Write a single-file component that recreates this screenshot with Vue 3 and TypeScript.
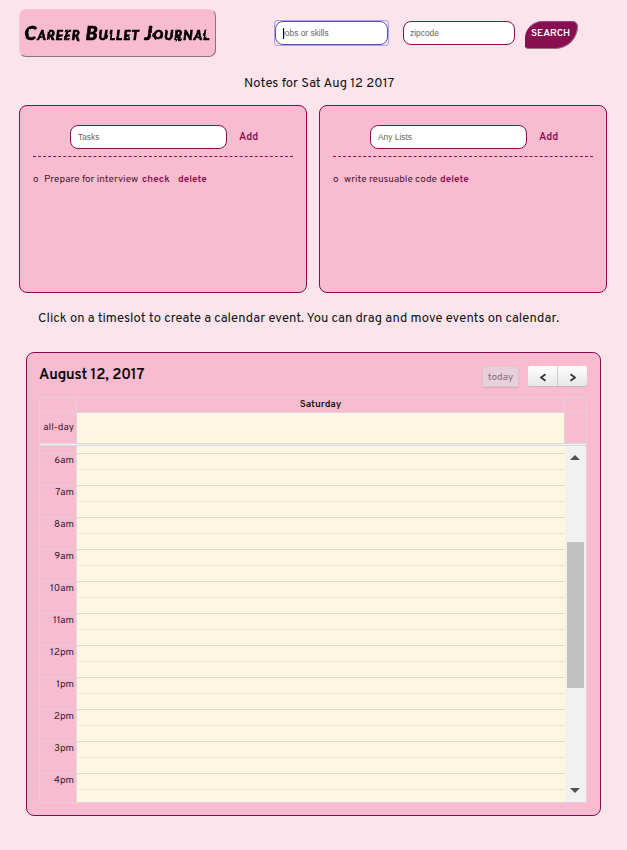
<script setup lang="ts">
import { onMounted, ref } from 'vue'

interface Note {
  text: string
  actions: string[]
}
interface Panel {
  placeholder: string
  notes: Note[]
}

const panels: Panel[] = [
  { placeholder: 'Tasks', notes: [{ text: 'Prepare for interview', actions: ['check', 'delete'] }] },
  { placeholder: 'Any Lists', notes: [{ text: 'write reusuable code', actions: ['delete'] }] },
]
const hours: string[] = ['6am', '7am', '8am', '9am', '10am', '11am', '12pm', '1pm', '2pm', '3pm', '4pm']

const skills = ref<HTMLInputElement | null>(null)
onMounted(() => skills.value?.focus())
</script>

<template>
  <div class="page">
    <header class="top">
      <h1 class="logo"><span>Career Bullet Journal</span></h1>
      <form class="search" @submit.prevent>
        <div class="focus-ring">
          <input ref="skills" class="field" placeholder="jobs or skills" />
          <i class="caret"></i>
        </div>
        <input class="field" placeholder="zipcode" />
        <button class="go"><span>SEARCH</span></button>
      </form>
    </header>

    <p class="date"><span>Notes for Sat Aug 12 2017</span></p>

    <main class="panels">
      <section v-for="p in panels" :key="p.placeholder" class="panel">
        <div class="entry">
          <input class="field" :placeholder="p.placeholder" />
          <button class="link add">Add</button>
        </div>
        <ul>
          <li v-for="n in p.notes" :key="n.text">
            <span class="dot">o</span><span :class="['note', n.actions.length > 1 ? 'task' : 'list']">{{ n.text }}</span>
            <button v-for="a in n.actions" :key="a" :class="['link', a]">{{ a }}</button>
          </li>
        </ul>
      </section>
    </main>

    <p class="hint"><span>Click on a timeslot to create a calendar event. You can drag and move events on calendar.</span></p>

    <section class="calendar">
      <div class="toolbar">
        <h2><span>August 12, 2017</span></h2>
        <button class="today">today</button>
        <div class="nav">
          <button><svg width="8" height="9" viewBox="0 0 8 9"><path d="M6.5 1.2 2 4.5 6.5 7.8" /></svg></button>
          <button><svg width="8" height="9" viewBox="0 0 8 9"><path d="M1.5 1.2 6 4.5 1.5 7.8" /></svg></button>
        </div>
      </div>
      <div class="table">
        <div class="row head"><div></div><div class="day">Saturday</div><div></div></div>
        <div class="row allday"><div class="label">all-day</div><div class="cell"></div><div></div></div>
        <div class="divider"></div>
        <div class="body">
          <div class="slots">
            <div class="slot partial"><div></div><div></div></div>
            <div v-for="h in hours" :key="h" class="hour">
              <div class="slot major"><div class="label">{{ h }}</div><div></div></div>
              <div class="slot minor"><div></div><div></div></div>
            </div>
          </div>
          <div class="bar">
            <svg width="10" height="5" viewBox="0 0 10 5"><path d="M0 5 5 0 10 5Z" /></svg>
            <div class="thumb"></div>
            <svg class="down" width="10" height="5" viewBox="0 0 10 5"><path d="M0 0 5 5 10 0Z" /></svg>
          </div>
        </div>
      </div>
    </section>

    <svg class="defs" width="0" height="0">
      <filter id="marker" x="-5%" y="-20%" width="110%" height="140%">
        <feTurbulence type="fractalNoise" baseFrequency="0.1" numOctaves="1" seed="4" />
        <feDisplacementMap in="SourceGraphic" scale="3" xChannelSelector="R" yChannelSelector="G" />
      </filter>
    </svg>
  </div>
</template>

<style>
body { margin: 0; background: #fbe4ec; }
</style>

<style scoped>
* { box-sizing: border-box; }
.page { width: 627px; height: 850px; overflow: hidden; background: #fbe4ec; font-family: Overpass, Roboto, "Liberation Sans", sans-serif; color: #111; }
h1, h2, p, ul { margin: 0; padding: 0; }
button { border: 0; padding: 0; font-family: inherit; }
.top { display: flex; align-items: flex-start; padding: 9px 0 0 19px; height: 70px; }
.logo { width: 197px; height: 48px; display: flex; align-items: center; justify-content: center; border-radius: 7px; background: #f8bbd0; border: 1px solid; border-color: #f3c9d8 #8f6f7b #8f6f7b #f3c9d8; font: italic 900 19px/46px "Permanent Marker", Lato, sans-serif; font-variant: small-caps; white-space: nowrap; color: #000; -webkit-text-stroke: .7px #000; letter-spacing: 1.05px; }
.logo span { filter: url(#marker); }
.search { display: flex; margin: 11px 0 0 58px; }
.field { height: 24px; border: 1px solid #880e4f; border-radius: 8px; background: #fff; outline: 0; padding: 0 6px; font: 8.4px "Liberation Sans", sans-serif; min-width: 0; caret-color: transparent; }
.field::placeholder { color: #666; opacity: 1; }
.focus-ring { position: relative; width: 115px; height: 26px; border: 1px solid #aaa4ee; border-radius: 3px; display: flex; }
.focus-ring .field { width: 113px; border-color: #5850a8; padding-left: 7px; }
.caret { position: absolute; left: 8px; top: 7px; width: 1px; height: 11px; background: #000; }
.search > .field { width: 112px; margin: 1px 10px 0 14px; }
.go { width: 53px; height: 28px; margin-top: 1px; border-radius: 20px 6px 26px 4px; background: #880e4f; border: 1px solid; border-color: #a0457a #9d6b85 #9d6b85 #880e4f; color: #fff; font-size: 10px; font-weight: 600; line-height: 24px; padding: 0 2px 2px 0; white-space: nowrap; letter-spacing: -.05px; }
.date { height: 35px; padding-left: 244px; font-size: 13px; line-height: 28px; letter-spacing: .08px; white-space: nowrap; }
.panels { display: flex; gap: 12px; padding: 0 19px; }
.panel { width: 288px; height: 188px; border: 1px solid #880e4f; border-radius: 8px; background: #f8bbd0; padding: 19px 13px; }
.entry { height: 32px; display: flex; border-bottom: 1px dashed #880e4f; padding-left: 37px; }
.entry .field { width: 157px; padding-left: 7px; }
.link { background: none; color: #880e4f; font-size: 10px; font-weight: 600; line-height: 14px; height: 14px; }
.add { margin: 6px 0 0 12px; font-size: 10.5px; }
ul { list-style: none; padding-top: 16px; }
li { display: flex; font-size: 10px; line-height: 14px; color: #4a1a30; white-space: nowrap; }
.dot { width: 11px; }
.task { width: 98px; }
.list { width: 96px; }
.check { width: 36px; text-align: left; }
.hint { height: 59px; padding: 12px 0 0 38px; font-size: 13px; line-height: 28px; white-space: nowrap; letter-spacing: .06px; }
.calendar { margin-left: 26px; width: 575px; height: 464px; border: 1px solid #880e4f; border-radius: 8px; background: #f8bbd0; padding: 13px 13px 0 12px; }
.toolbar { display: flex; height: 31px; }
h2 { flex: 1; font-size: 15px; font-weight: 500; line-height: 19px; color: #000; -webkit-text-stroke: .2px; letter-spacing: -.1px; }
.today { width: 37px; height: 21px; border-radius: 2px; background: #e8d0da; border: 1px solid #e3c3d0; box-shadow: 0 1px 1px #d9b0bf; color: #856f7a; font-size: 10px; line-height: 21px; margin-right: 9px; }
.nav { display: flex; width: 59px; height: 21px; border-radius: 2px; background: linear-gradient(#fff, #e6e6e6); border-bottom: 1px solid #c5b7bd; }
.nav button { flex: 1; background: none; display: flex; align-items: center; justify-content: center; padding-top: 2px; }
.nav button + button { border-left: 1px solid #ccc; }
.nav path { fill: none; stroke: #333; stroke-width: 1.7; }
.table { width: 548px; height: 406px; border: 1px solid #e9cdd7; display: flex; flex-direction: column; }
.row { display: grid; grid-template-columns: 37px 487px 1fr; }
.row > div + div { border-left: 1px solid #e5cfd6; }
.head { height: 14px; }
.day { text-align: center; font-size: 10px; font-weight: 600; line-height: 14px; color: #111; }
.row > div:nth-child(2) { margin-left: -1px; }
.allday { height: 31px; border-top: 1px solid #e5cfd6; }
.cell { background: #fdf6e3; }
.label { font-size: 10px; text-align: right; padding-right: 2px; color: #3c1a28; white-space: nowrap; }
.allday .label { line-height: 30px; padding-right: 3px; }
.divider { height: 3px; background: #eee; border: 1px solid #dadada; border-width: 1px 0; }
.body { flex: 1; min-height: 0; display: flex; overflow: hidden; }
.slots { width: 525px; }
.slot { height: 16px; display: grid; grid-template-columns: 36px 1fr; border-top: 1px solid transparent; }
.slot > div:first-child { border-top: 1px solid #e9ccd6; margin-top: -1px; }
.slot > div:last-child { background: #fdf6e3; border-left: 1px solid #ddd; border-top: 1px solid #dcd8cc; margin-top: -1px; }
.minor > div:first-child, .minor > div:last-child { border-top-style: dotted; }
.slot .label { line-height: 13px; }
.partial { height: 7px; }
.partial > div:first-child, .partial > div:last-child { border-top: 0; }
.bar { flex: 1; background: #f1f1f1; display: flex; flex-direction: column; align-items: center; padding: 9px 2px 9px 1px; }
.bar path { fill: #505050; }
.thumb { width: 17px; height: 146px; flex: none; background: #c1c1c1; margin-top: 82px; }
.down { margin-top: auto; }
.defs { display: block; }
</style>
